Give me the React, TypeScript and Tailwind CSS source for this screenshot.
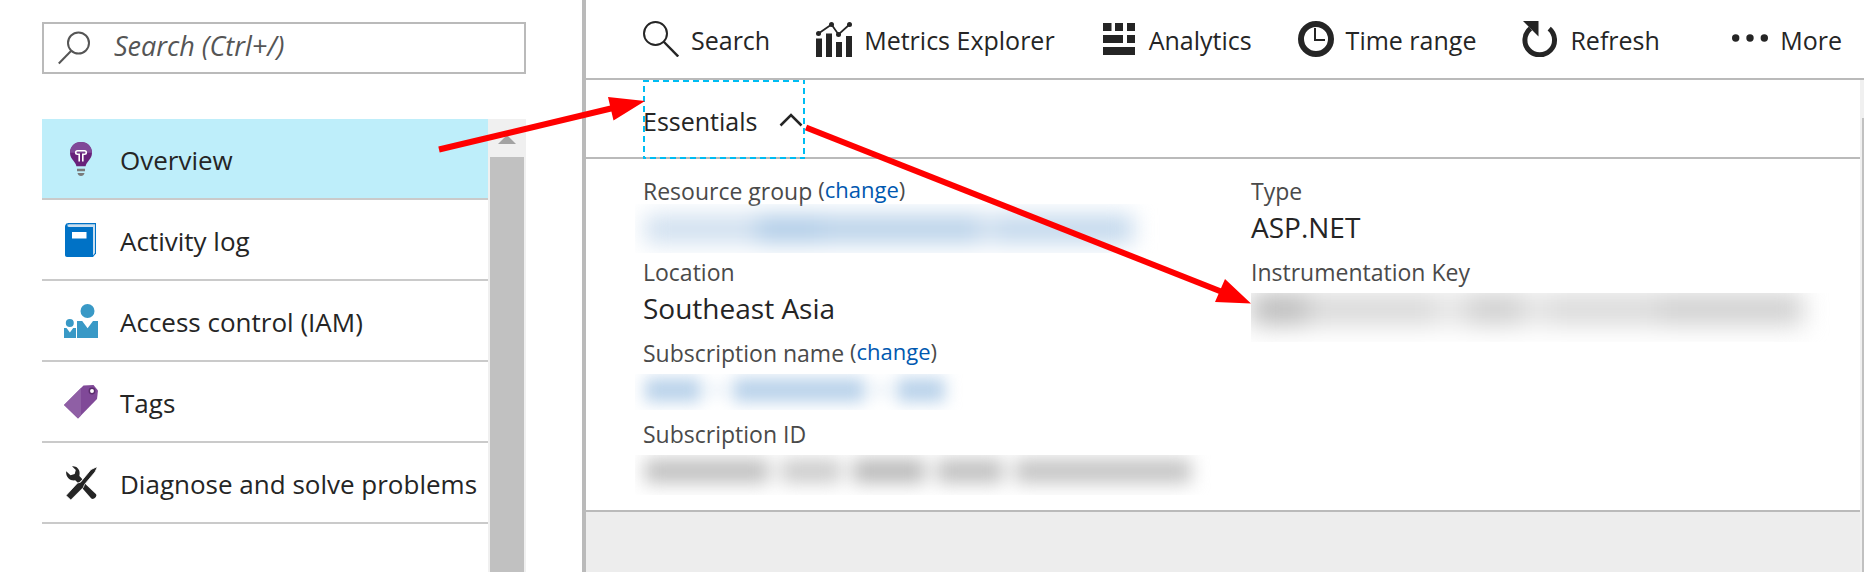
import type { ReactNode } from "react";

function BulbIcon() {
  return (
    <svg width="34" height="34" viewBox="0 0 34 34" aria-hidden="true">
      <path d="M17 0C10.6 0 6 4.7 6 10.7c0 3.6 1.600 5.600 3.400 8 1.600 2.100 2.600 3.300 3 5.600h9.200c.4-2.300 1.400-3.500 3-5.600 1.800-2.400 3.400-4.400 3.400-8C28 4.700 23.400 0 17 0Z" fill="#68217a" />
      <path d="M17 0C10.6 0 6 4.7 6 10.7h22C28 4.7 23.4 0 17 0Z" fill="#804998" />
      <path d="M15.2 19.500V12.200h-1.700c-1.200 0-1.800-.8-1.800-1.700s.6-1.700 1.800-1.700h7c1.200 0 1.800.8 1.800 1.700s-.6 1.700-1.800 1.700h-1.700v7.300" fill="none" stroke="#fff" strokeWidth="1.600" />
      <path d="M13 26.8h8v2.400h-8zM13.500 31h7c-.4 2-1.700 3-3.500 3s-3.100-1-3.500-3Z" fill="#7a7a7a" />
    </svg>
  );
}

function BookIcon() {
  return (
    <svg width="34" height="34" viewBox="0 0 34 34" aria-hidden="true">
      <path d="M3.500 0H32v30.500L29 34H3.500Z" fill="#0072c6" />
      <path d="M4.500 1.300H31V30l-2 2.500V4H3Z" fill="#c9dff0" />
      <path d="M1 3.500C1 2 2 .5 3.500 0v1.500C2.800 2.500 3.500 4 5 4h23.500v30H3c-1.200 0-2-.8-2-2Z" fill="#0072c6" />
      <path d="M8 9h14.500v6.500H8z" fill="#fff" />
    </svg>
  );
}

function PeopleIcon() {
  return (
    <svg width="34" height="34" viewBox="0 0 34 34" fill="#3999c6" aria-hidden="true">
      <circle cx="23.500" cy="7" r="7" />
      <circle cx="5.800" cy="19" r="4" />
      <path d="M13 17h5.200l5.400 7.200L29 17h5v17H13zM0 24h2.500l3.400 4.500L9.200 24H12v10H0z" />
    </svg>
  );
}

function TagIcon() {
  return (
    <svg width="34" height="34" viewBox="0 0 34 34" aria-hidden="true">
      <path d="M19.500.5 29.500 0 34 5.500 33 14 14 33.500 0 20Z" fill="#804998" />
      <path d="M19.500.5 17 3v27.500L14 33.500 0 20Z" fill="#8f5fa5" />
      <circle cx="28" cy="6" r="2.700" fill="#fff" stroke="#5c2d6e" strokeWidth="1.500" />
    </svg>
  );
}

function ToolsIcon() {
  return (
    <svg width="34" height="34" viewBox="0 0 34 34" fill="#252525" aria-hidden="true">
      <path d="M8 .3C12 -.5 16 3 15.600 7.500L15.400 10l3 3.300-4 4-3.200-3C6 15 1.500 11 2.200 5.200L6.500 9.300 10.700 8 11.800 4Z" />
      <path d="M20.500 17.300 31.800 28c1.800 2-1.800 6.300-4.500 4.500L16.800 20.500Z" />
      <path d="M32.500 1 33 1.800 31 6 20.500 18.500l-1.200 3L6.800 34 2 29.500 13.500 17l3-.8L27 3.500Z" stroke="#fff" strokeWidth=".8" />
    </svg>
  );
}

function MagnifierIcon() {
  return (
    <svg width="36" height="36" viewBox="0 0 36 36" fill="none" stroke="#252525" strokeWidth="2" aria-hidden="true">
      <circle cx="12.500" cy="12.500" r="11.500" />
      <path d="m20.500 20.500 14.700 15" strokeWidth="2.400" />
    </svg>
  );
}

function MetricsIcon() {
  return (
    <svg width="36" height="36" viewBox="0 0 36 36" fill="#252525" aria-hidden="true">
      <path d="M0 17.500h6V36H0zM10 12.500h6V36h-6zM20 21h6v15h-6zM30 15h6v21h-6z" />
      <path d="M2.500 12.500 15.500 3.500l7 10L33.500 3.500" fill="none" stroke="#252525" strokeWidth="1.700" />
      <circle cx="2.500" cy="12.500" r="2.500" />
      <circle cx="15.500" cy="3.500" r="2.500" />
      <circle cx="22.500" cy="13.500" r="2.500" />
      <circle cx="33.500" cy="3.500" r="2.500" />
    </svg>
  );
}

function AnalyticsIcon() {
  return (
    <svg width="36" height="36" viewBox="0 0 36 36" fill="#252525" aria-hidden="true">
      <path d="M2 2h8.500v8H2zM14 2h8v8h-8zM26 2h8v8h-8zM2 14h20v8H2zM26 14h8v8h-8zM2 26h32v8H2z" />
    </svg>
  );
}

function ClockIcon() {
  return (
    <svg width="36" height="36" viewBox="0 0 36 36" fill="none" stroke="#252525" aria-hidden="true">
      <circle cx="18" cy="18" r="15" strokeWidth="6" />
      <path d="M17 7v12h10" strokeWidth="2" />
    </svg>
  );
}

function RefreshIcon() {
  return (
    <svg width="36" height="36" viewBox="0 0 36 36" aria-hidden="true">
      <path d="M8.500 7.500A14.800 14.800 0 1 0 27.200 7.700" fill="none" stroke="#252525" strokeWidth="5" />
      <path d="M1 0h15.500v15.500Z" fill="#252525" />
    </svg>
  );
}

function DotsIcon() {
  return (
    <svg width="36" height="36" viewBox="0 0 36 36" fill="#252525" aria-hidden="true">
      <circle cx="3.700" cy="17" r="3.700" />
      <circle cx="18" cy="17" r="3.700" />
      <circle cx="32.300" cy="17" r="3.700" />
    </svg>
  );
}

const navItems = [
  { label: "Overview", icon: <BulbIcon />, active: true },
  { label: "Activity log", icon: <BookIcon />, active: false },
  { label: "Access control (IAM)", icon: <PeopleIcon />, active: false },
  { label: "Tags", icon: <TagIcon />, active: false },
  { label: "Diagnose and solve problems", icon: <ToolsIcon />, active: false },
];

const commands = [
  { label: "Search", icon: <MagnifierIcon /> },
  { label: "Metrics Explorer", icon: <MetricsIcon /> },
  { label: "Analytics", icon: <AnalyticsIcon /> },
  { label: "Time range", icon: <ClockIcon /> },
  { label: "Refresh", icon: <RefreshIcon /> },
];

function Sidebar() {
  return (
    <aside className="flex w-[582px] shrink-0 flex-col pr-14 pl-[42px] pt-[22px]">
      <label className="flex h-[52px] shrink-0 items-center gap-6 border-2 border-[#bababa] px-3.5">
        <svg width="32" height="34" viewBox="0 0 32 34" fill="none" stroke="#555" strokeWidth="2" className="shrink-0" aria-hidden="true">
          <circle cx="20.500" cy="12" r="10.500" />
          <path d="M13 20 .8 32.500" />
        </svg>
        <input
          type="text"
          aria-label="Search (Ctrl+/)"
          placeholder="Search (Ctrl+/)"
          className="min-w-0 flex-1 bg-transparent pb-1 text-[27px] text-[#555] italic outline-none placeholder:text-[#555]"
        />
      </label>
      <div className="mt-[45px] flex min-h-0 flex-1">
        <nav className="flex-1 text-[26px]">
          <ul>
            {navItems.map((item) => (
              <li key={item.label} className="border-b-2 border-[#cacaca]">
                <a
                  href="#"
                  className={
                    item.active
                      ? "flex h-[79px] items-center gap-[22px] bg-[#beeefa] pl-[22px]"
                      : "flex h-[79px] items-center gap-[22px] pl-[22px]"
                  }
                >
                  {item.icon}
                  <span className="pt-0.5 whitespace-nowrap">{item.label}</span>
                </a>
              </li>
            ))}
          </ul>
        </nav>
        <div className="flex w-[38px] flex-col bg-[#f0f0f0] px-0.5">
          <div className="flex h-[38px] shrink-0 items-center justify-center pt-0.5">
            <svg width="18" height="9" viewBox="0 0 18 9" aria-hidden="true">
              <path d="M9 0 18 9H0Z" fill="#a3a3a3" />
            </svg>
          </div>
          <div className="flex-1 bg-[#c1c1c1]" />
        </div>
      </div>
    </aside>
  );
}

function Property({ label, change, children }: { label: string; change?: boolean; children: ReactNode }) {
  return (
    <div className="h-[81px]">
      <dt className="flex h-[34px] gap-1.5 text-[23px] leading-[34px] text-[#4a4a4a]">
        {label}
        {change && (
          <span className="text-[22px] leading-[30px]">
            (<a href="#" className="text-[#0058b0]">change</a>)
          </span>
        )}
      </dt>
      <dd className="text-[28px] leading-[38px]">{children}</dd>
    </div>
  );
}

function Essentials() {
  return (
    <dl className="grid grid-cols-[608px_1fr] border-b-2 border-[#bababa] pt-[15px] pb-3 pl-[57px]">
      <div>
        <Property label="Resource group" change>
          <div className="-mt-1 -ml-2 flex h-[49px] w-[540px] items-center overflow-hidden pl-2.5" aria-hidden="true">
            <div className="flex h-7 w-[488px] blur-[11px]">
              <i className="w-28 bg-[#cfdfef]" />
              <i className="w-16 bg-[#aecbe7]" />
              <i className="w-40 bg-[#b8d1e9]" />
              <i className="w-3 bg-[#dbe6f2]" />
              <i className="flex-1 bg-[#c1d7ec]" />
            </div>
          </div>
        </Property>
        <Property label="Location">Southeast Asia</Property>
        <Property label="Subscription name" change>
          <div className="mt-1 -ml-2 flex h-9 w-[340px] overflow-hidden pt-1 pl-2.5" aria-hidden="true">
            <div className="flex h-6 gap-3 blur-[8px]">
              <i className="w-14 bg-[#b9d2ea]" />
              <i className="my-2 w-2 bg-[#c3d8ec]" />
              <i className="w-[132px] bg-[#b9d2ea]" />
              <i className="my-2 w-2 bg-[#c3d8ec]" />
              <i className="w-12 bg-[#b9d2ea]" />
            </div>
          </div>
        </Property>
        <Property label="Subscription ID">
          <div className="mt-1 -ml-2 flex h-10 w-[576px] overflow-hidden pt-1 pl-2.5" aria-hidden="true">
            <div className="flex h-6 gap-3 blur-[9px]">
              <i className="w-[124px] bg-[#c0c0c0]" />
              <i className="w-[60px] bg-[#cccccc]" />
              <i className="w-[72px] bg-[#bababa]" />
              <i className="w-[66px] bg-[#c0c0c0]" />
              <i className="w-[176px] bg-[#c4c4c4]" />
            </div>
          </div>
        </Property>
      </div>
      <div>
        <Property label="Type">ASP.NET</Property>
        <Property label="Instrumentation Key">
          <div className="mt-1 flex h-[49px] w-[581px] max-w-full overflow-hidden" aria-hidden="true">
            <div className="flex h-8 blur-[12px]">
              <i className="w-14 bg-[#bcbcbc]" />
              <i className="w-32 bg-[#d9d9d9]" />
              <i className="w-8 bg-[#e6e6e6]" />
              <i className="w-14 bg-[#cfcfcf]" />
              <i className="w-6 bg-[#e6e6e6]" />
              <i className="w-28 bg-[#dadada]" />
              <i className="w-36 bg-[#d0d0d0]" />
            </div>
          </div>
        </Property>
      </div>
    </dl>
  );
}

function Arrows() {
  return (
    <svg width="1864" height="572" viewBox="0 0 1864 572" className="pointer-events-none absolute top-0 left-0" aria-hidden="true">
      <g stroke="#f00" strokeWidth="6">
        <path d="M439 149.500 613 108" />
        <path d="M806 127.500 1221 291.500" />
      </g>
      <path d="M645 101 608 97 613.500 120.500ZM1251 303.500 1225 279 1215 302Z" fill="#f00" />
    </svg>
  );
}

export default function App() {
  return (
    <div className="relative flex min-h-screen overflow-hidden bg-white font-['Open_Sans',sans-serif] text-[25px] leading-[34px] text-[#252525]">
      <Sidebar />
      <main className="flex min-w-0 flex-1 flex-col border-l-4 border-[#bababa]">
        <div className="flex h-20 shrink-0 items-center gap-[46px] border-b-2 border-[#bababa] pr-[22px] pl-[57px]">
          {commands.map((command) => (
            <button key={command.label} type="button" className="flex shrink-0 items-center gap-3 whitespace-nowrap">
              {command.icon}
              <span className="pt-0.5">{command.label}</span>
            </button>
          ))}
          <button type="button" className="ml-auto flex shrink-0 items-center gap-3 whitespace-nowrap">
            <DotsIcon />
            <span className="pt-0.5">More</span>
          </button>
        </div>
        <div className="flex flex-1">
          <div className="flex min-w-0 flex-1 flex-col">
            <div className="border-b-2 border-[#bababa] pl-[57px]">
              <button type="button" aria-expanded="true" className="relative -mb-0.5 flex h-[79px] w-[162px] items-center justify-between pr-0.5">
                <svg className="absolute inset-0 h-full w-full" fill="none" stroke="#00bcf2" strokeWidth="4" strokeDasharray="6 4" aria-hidden="true">
                  <rect width="100%" height="100%" />
                </svg>
                <span className="pt-0.5">Essentials</span>
                <svg width="24" height="14" viewBox="0 0 24 14" fill="none" stroke="#252525" strokeWidth="2.500" aria-hidden="true">
                  <path d="M1.500 12.500 12 2l10.500 10.500" />
                </svg>
              </button>
            </div>
            <Essentials />
            <div className="flex-1 bg-[#ededed]" />
          </div>
          <div className="flex w-1 flex-col bg-[#f0f0f0] pt-[38px] pl-0.5">
            <div className="flex-1 bg-[#c1c1c1]" />
          </div>
        </div>
      </main>
      <Arrows />
    </div>
  );
}
